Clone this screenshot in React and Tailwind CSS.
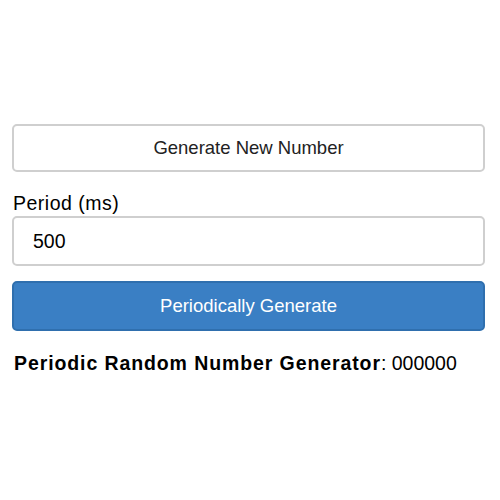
import React, { useState } from 'react';

const App = () => {
  const [period, setPeriod] = useState('500');
  const [value] = useState('000000');

  return (
    <div className="min-h-[500px] w-[500px] bg-white px-3 pt-[124px] font-['Liberation_Sans',Arial,sans-serif] text-black">
      <div className="flex w-[473px] flex-col">
        <button className="h-[48px] w-full rounded-[5px] border-2 border-[#cfcfcf] bg-white text-[18.5px] text-[#222]">
          Generate New Number
        </button>

        <label className="mt-[20px] mb-[2px] block pl-[1px] text-[19.5px] leading-[22px] tracking-[0.5px]">Period (ms)</label>
        <input
          value={period}
          onChange={(e) => setPeriod(e.target.value)}
          className="h-[50px] w-full rounded-[5px] border-2 border-[#cfcfcf] bg-white px-[19px] text-[19.5px] text-black outline-none"
        />

        <button className="mt-[15px] h-[50px] w-full rounded-[5px] border-2 border-[#2f6fae] bg-[#3a7fc4] text-[18.5px] text-white">
          Periodically Generate
        </button>

        <p className="mt-[21px] pl-[2px] text-[19.5px] leading-[22px]">
          <span className="font-bold tracking-[0.9px]">Periodic Random Number Generator</span>: {value}
        </p>
      </div>
    </div>
  );
};

export default App;
